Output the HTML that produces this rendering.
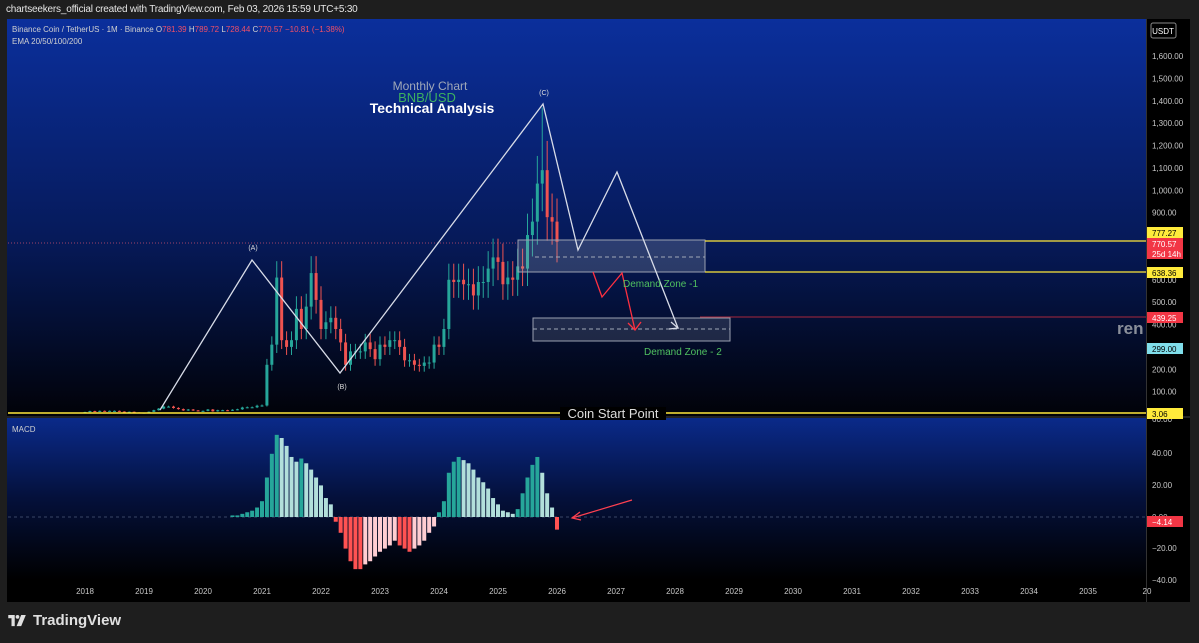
<!DOCTYPE html>
<html><head><meta charset="utf-8"><style>
body{margin:0;width:1199px;height:643px;background:#1e1e1e;overflow:hidden;font-family:"Liberation Sans",sans-serif;}
#top{position:absolute;left:6px;top:4px;color:#e6e6e6;font-size:10px;letter-spacing:-0.2px}
#frame{position:absolute;left:7px;top:19px;width:1183px;height:583px;background:#000;overflow:hidden;}
#foot{position:absolute;left:8px;top:612px;color:#e0e0e0;font-size:15px;font-weight:bold;display:flex;align-items:center;gap:6px}
</style></head><body>
<div id="top">chartseekers_official created with TradingView.com, Feb 03, 2026 15:59 UTC+5:30</div>
<div id="frame">
<svg id="s" width="1183" height="583" viewBox="7 19 1183 583" xmlns="http://www.w3.org/2000/svg" font-family="Liberation Sans, sans-serif">
<defs>
<linearGradient id="g1" x1="0" y1="0" x2="0" y2="1"><stop offset="0" stop-color="#0b2f9c"/><stop offset="0.55" stop-color="#061a5a"/><stop offset="1" stop-color="#010208"/></linearGradient>
<linearGradient id="g2" x1="0" y1="0" x2="0" y2="1"><stop offset="0" stop-color="#0a2a8a"/><stop offset="0.5" stop-color="#04103a"/><stop offset="1" stop-color="#000"/></linearGradient>
</defs>
<rect x="7" y="19" width="1140" height="397" fill="url(#g1)"/>
<rect x="7" y="418" width="1140" height="162" fill="url(#g2)"/>
<rect x="1147" y="19" width="43" height="583" fill="#000"/>
<rect x="7" y="416" width="1183" height="2" fill="#222"/>
<line x1="1146.5" y1="19" x2="1146.5" y2="602" stroke="#333"/>
<text x="12" y="32" font-size="8" fill="#d0d0d0">Binance Coin / TetherUS · 1M · Binance  <tspan fill="#d0d0d0">O</tspan><tspan fill="#f05068">781.39 </tspan><tspan fill="#d0d0d0">H</tspan><tspan fill="#f05068">789.72 </tspan><tspan fill="#d0d0d0">L</tspan><tspan fill="#f05068">728.44 </tspan><tspan fill="#d0d0d0">C</tspan><tspan fill="#f05068">770.57  −10.81 (−1.38%)</tspan></text>
<text x="12" y="44" font-size="8" fill="#d0d0d0">EMA 20/50/100/200</text>
<text x="12" y="432" font-size="8" fill="#d0d0d0">MACD</text>
<rect x="1151" y="23" width="25" height="15" rx="2" fill="#000" stroke="#888"/>
<text x="1163" y="34" font-size="8" fill="#fff" text-anchor="middle">USDT</text>
<g id="ax" font-size="8" fill="#c8c8c8"></g>
<line x1="8" y1="243" x2="518" y2="243" stroke="#d05070" stroke-dasharray="1,2" stroke-width="0.7"/>
<line x1="8" y1="517" x2="1146" y2="517" stroke="#7080a0" stroke-dasharray="3,3" stroke-width="0.6"/>
<g id="c"></g>
<g id="m"></g>
<rect x="518" y="240" width="187" height="32" fill="rgba(160,170,190,0.25)" stroke="#9aa0b0" stroke-width="1"/>
<line x1="535" y1="257" x2="705" y2="257" stroke="#a0a8b8" stroke-dasharray="4,3"/>
<rect x="533" y="318" width="197" height="23" fill="rgba(160,170,190,0.18)" stroke="#9aa0b0" stroke-width="1"/>
<line x1="533" y1="329" x2="730" y2="329" stroke="#a0a8b8" stroke-dasharray="4,3"/>
<line x1="705" y1="241" x2="1146" y2="241" stroke="#ffe83a" stroke-width="1.3"/>
<line x1="705" y1="272" x2="1146" y2="272" stroke="#ffe83a" stroke-width="1.3"/>
<line x1="700" y1="317" x2="1146" y2="317" stroke="#e03040" stroke-width="0.8"/>
<line x1="8" y1="413" x2="1146" y2="413" stroke="#ffe83a" stroke-width="1.5"/>
<rect x="560" y="407" width="106" height="13" fill="#000"/>
<text x="613" y="418" font-size="13" fill="#ddd" text-anchor="middle">Coin Start Point</text>
<polyline points="160,410 252,260 340,373 543,104 578,250 617,172 678,328" fill="none" stroke="#d8dce8" stroke-width="1.3"/>
<polyline points="671,322 678,328 669,329" fill="none" stroke="#d8dce8" stroke-width="1.3"/>
<polyline points="593,272 602,297 622,273 635,330" fill="none" stroke="#ff3040" stroke-width="1.3"/>
<polyline points="628,323 635,330 641,322" fill="none" stroke="#ff3040" stroke-width="1.3"/>
<text x="253" y="250" font-size="7" fill="#ddd" text-anchor="middle">(A)</text>
<text x="342" y="389" font-size="7" fill="#ddd" text-anchor="middle">(B)</text>
<text x="544" y="95" font-size="7" fill="#ddd" text-anchor="middle">(C)</text>
<text x="430" y="90" font-size="12" fill="#a0a8b8" text-anchor="middle">Monthly Chart</text>
<text x="427" y="102" font-size="13" fill="#3cb060" text-anchor="middle">BNB/USD</text>
<text x="432" y="113" font-size="14" font-weight="bold" fill="#fff" text-anchor="middle">Technical Analysis</text>
<text x="623" y="287" font-size="10" fill="#50c060">Demand Zone -1</text>
<text x="644" y="355" font-size="10" fill="#50c060">Demand Zone - 2</text>
<text x="1117" y="334" font-size="17" font-weight="bold" fill="#8a8f9a">ren</text>
<line x1="572" y1="518" x2="632" y2="500" stroke="#ff4050" stroke-width="1.2"/>
<polyline points="580,512 572,518 581,520" fill="none" stroke="#ff4050" stroke-width="1.2"/>
<g id="lb" font-size="8"></g>
</svg>
</div>
<div id="foot"><svg width="19" height="12" viewBox="0 0 20 13"><path d="M0 0h7v12h-3.5v-8.5h-3.5z" fill="#e0e0e0"/><circle cx="10" cy="2" r="2" fill="#e0e0e0"/><path d="M14 0h5l-5 12h-5z" fill="#e0e0e0"/></svg>TradingView</div>
<script>
var NS="http://www.w3.org/2000/svg";
function el(p,t,a,txt){var e=document.createElementNS(NS,t);for(var k in a)e.setAttribute(k,a[k]);if(txt)e.textContent=txt;document.getElementById(p).appendChild(e);return e;}
function py(p){return 414-p*0.2237;}
for(var p=100;p<=1600;p+=100){if(p==700||p==800)continue;el('ax','text',{x:1152,y:py(p)+3},p.toLocaleString('en-US',{minimumFractionDigits:2}));}
[[60,422],[40,456],[20,488],[0,520],[-20,551],[-40,583]].forEach(function(a){el('ax','text',{x:1152,y:a[1]},(a[0]<0?'−':'')+Math.abs(a[0]).toFixed(2));});
for(var y=2018;y<=2036;y++){el('ax','text',{x:85+(y-2018)*59,y:594,'text-anchor':'middle'},y==2036?'20':String(y));}
var c=[9,13,10,14,13,14,14,11,10,10,7,6,6,10,17,24,33,33,27,22,16,20,16,14,14,20,12,17,17,15,19,21,29,30,30,37,38,220,310,610,330,300,330,470,380,480,630,510,380,410,430,380,320,220,280,280,280,320,290,245,310,300,330,330,300,240,240,220,215,230,230,310,300,380,600,590,600,580,580,530,590,590,650,700,680,580,610,600,660,650,800,860,1030,1090,880,860,770];
var prev=8;
for(var i=0;i<c.length;i++){var o=prev,cl=c[i],x=85+i*59/12,up=cl>=o,col=up?'#26a69a':'#ef5350';
var hi=Math.max(o,cl)*1.12,lo=Math.min(o,cl)*0.88;if(i==93)hi=1370;
el('c','line',{x1:x,y1:py(hi),x2:x,y2:py(lo),stroke:col,'stroke-width':1});
var t=py(Math.max(o,cl)),b=py(Math.min(o,cl));el('c','rect',{x:x-1.5,y:t,width:3,height:Math.max(1,b-t),fill:col});prev=cl;}
var arr=[1,1,2,3,4,6,10,25,40,52,50,45,38,35,37,34,30,25,20,12,8,-3,-10,-20,-28,-33,-33,-30,-28,-25,-22,-20,-18,-15,-18,-20,-22,-20,-18,-15,-10,-6,3,10,28,35,38,36,34,30,25,22,18,12,8,4,3,2,5,15,25,33,38,28,15,6,-8];
var pv=0;for(var j=0;j<arr.length;j++){var i=30+j,v=arr[j],x=85+i*59/12,col;
if(v>=0)col=v>=pv?'#26a69a':'#b2dfdb';else col=v<=pv?'#ff5252':'#ffcdd2';
var y0=517,y1=517-v*1.58;el('m','rect',{x:x-2,y:Math.min(y0,y1),width:4,height:Math.max(1,Math.abs(y1-y0)),fill:col});pv=v;}
function lab(y,h,bg,fg,t){el('lb','rect',{x:1147,y:y,width:36,height:h,fill:bg});el('lb','text',{x:1152,y:y+9,fill:fg},t);}
lab(227,11,'#ffeb3b','#000','777.27');lab(238,11,'#f23645','#fff','770.57');
el('lb','rect',{x:1147,y:249,width:36,height:10,fill:'#f23645'});el('lb','text',{x:1152,y:257,fill:'#fff'},'25d 14h');
lab(267,11,'#ffeb3b','#000','638.36');lab(312,11,'#f23645','#fff','439.25');lab(343,11,'#80deea','#000','299.00');lab(408,11,'#ffeb3b','#000','3.06');lab(516,11,'#f23645','#fff','−4.14');
</script>
</body></html>
